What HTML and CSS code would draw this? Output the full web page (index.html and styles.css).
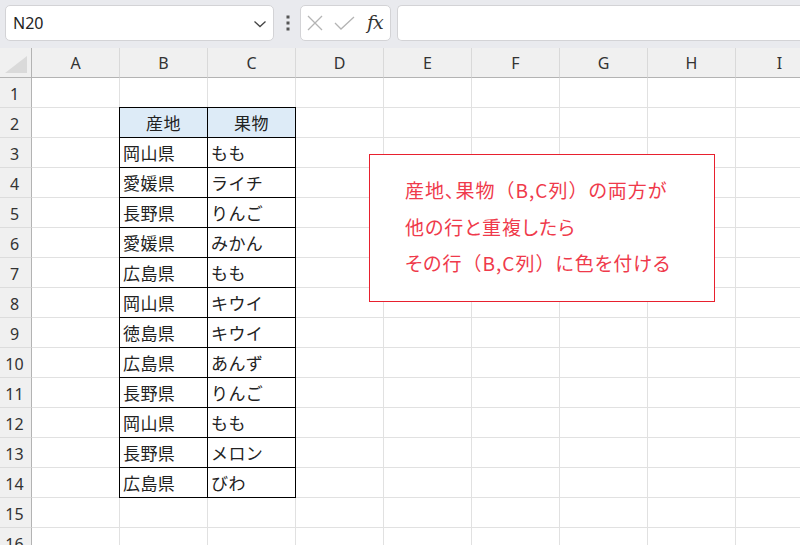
FILE: index.html
```html
<!DOCTYPE html>
<html lang="ja">
<head>
	<meta charset="UTF-8">
	<title>Sheet</title>
	<link rel="stylesheet" href="styles.css">
</head>
<body>
	<header class="topbar">
		<div class="namebox">
			<span>N20</span>
			<svg class="chevron" width="14" height="8" viewBox="0 0 14 8"><path d="M1.5 1.5 L7 6.5 L12.5 1.5" fill="none" stroke="#444" stroke-width="1.3"/></svg>
		</div>
		<div class="dots">
			<svg width="4" height="16" viewBox="0 0 4 16"><rect x="0.5" y="0.5" width="3" height="3" fill="#555"/><rect x="0.5" y="6.5" width="3" height="3" fill="#555"/><rect x="0.5" y="12.5" width="3" height="3" fill="#555"/></svg>
		</div>
		<div class="fbuttons">
			<svg width="16" height="16" viewBox="0 0 16 16"><path d="M1 1 L15 15 M15 1 L1 15" stroke="#b4b4b4" stroke-width="1.3"/></svg>
			<svg width="21" height="14" viewBox="0 0 21 14"><path d="M1 7 L7 13 L20 1" fill="none" stroke="#b4b4b4" stroke-width="1.3"/></svg>
			<span class="fx">fx</span>
		</div>
		<div class="fbar"></div>
	</header>

	<section class="sheet" id="sheet">
		<div class="corner">
			<svg width="22" height="17" viewBox="0 0 22 17"><polygon points="22,0 22,17 0,17" fill="#dadada"/></svg>
		</div>
		<div class="datatable">
			<div class="dcell head">産地</div><div class="dcell head">果物</div>
			<div class="dcell">岡山県</div><div class="dcell">もも</div>
			<div class="dcell">愛媛県</div><div class="dcell">ライチ</div>
			<div class="dcell">長野県</div><div class="dcell">りんご</div>
			<div class="dcell">愛媛県</div><div class="dcell">みかん</div>
			<div class="dcell">広島県</div><div class="dcell">もも</div>
			<div class="dcell">岡山県</div><div class="dcell">キウイ</div>
			<div class="dcell">徳島県</div><div class="dcell">キウイ</div>
			<div class="dcell">広島県</div><div class="dcell">あんず</div>
			<div class="dcell">長野県</div><div class="dcell">りんご</div>
			<div class="dcell">岡山県</div><div class="dcell">もも</div>
			<div class="dcell">長野県</div><div class="dcell">メロン</div>
			<div class="dcell">広島県</div><div class="dcell">びわ</div>
		</div>
		<div class="note">
			産地、果物<span class="fw">（</span>B,C列<span class="fw">）</span>の両方が<br>
			他の行と重複したら<br>
			その行<span class="fw">（</span>B,C列<span class="fw">）</span>に色を付ける
		</div>
	</section>

	<script>
	(function(){
		var sheet = document.getElementById("sheet");
		var cols = "ABCDEFGHI";
		function add(cls, text){
			var d = document.createElement("div");
			d.className = cls;
			if (text) d.textContent = text;
			sheet.appendChild(d);
		}
		for (var c = 0; c < cols.length; c++){
			add("colhead", cols[c]);
		}
		for (var r = 1; r <= 16; r++){
			add("rowhead", String(r));
			// B,C of rows 2-14 are taken by the table
			var n = (r >= 2 && r <= 14) ? 7 : 9;
			for (var i = 0; i < n; i++){
				add("cell");
			}
		}
	})();
	</script>
</body>
</html>
```

FILE: styles.css
```css
* {
	margin: 0;
	padding: 0;
	box-sizing: border-box;
}
body {
	width: 800px;
	height: 545px;
	overflow: hidden;
	position: relative;
	background: #fff;
	font-family: "Noto Sans", "Noto Sans CJK JP", sans-serif;
}
.topbar {
	height: 48px;
	background: #e9eaee;
	display: flex;
	align-items: flex-start;
	padding: 5px 0 0 5px;
}
.namebox {
	width: 269px;
	height: 36px;
	background: #fff;
	border: 1px solid #d3d3d6;
	border-radius: 5px;
	display: flex;
	align-items: center;
	padding: 0 6px 0 7px;
	font-size: 16px;
	color: #222;
}
.namebox span {
	flex: 1;
}
.chevron {
	margin-top: 2px;
}
.dots {
	width: 26px;
	height: 36px;
	display: flex;
	align-items: center;
	justify-content: center;
	padding-left: 1px;
}
.fbuttons {
	width: 91px;
	height: 36px;
	background: #fff;
	border: 1px solid #d3d3d6;
	border-radius: 5px;
	display: flex;
	align-items: center;
	padding-left: 6px;
	gap: 11px;
}
.fx {
	font-family: "DejaVu Serif", serif;
	font-style: italic;
	font-size: 19px;
	color: #333;
	margin-left: 1px;
	margin-top: -3px;
	letter-spacing: -1px;
}
.fbar {
	flex: 1;
	height: 36px;
	margin-left: 6px;
	background: #fff;
	border: 1px solid #d3d3d6;
	border-right: none;
	border-radius: 5px 0 0 5px;
}

.sheet {
	position: relative;
	display: grid;
	grid-template-columns: 32px repeat(9, 88px);
	grid-auto-rows: 30px;
	width: 800px;
	overflow: hidden;
}
.corner {
	background: #f0f0f0;
	border-bottom: 1px solid #b3b3b3;
	border-right: 1px solid #b3b3b3;
	display: flex;
	align-items: flex-end;
	justify-content: flex-end;
	padding: 0 4px 4px 0;
}
.colhead {
	background: #f0f0f0;
	border-bottom: 1px solid #b3b3b3;
	border-right: 1px solid #d9d9d9;
	display: flex;
	align-items: center;
	justify-content: center;
	font-size: 16px;
	color: #333;
}
.rowhead {
	grid-column: 1;
	background: #f0f0f0;
	border-right: 1px solid #b3b3b3;
	border-bottom: 1px solid #dcdcdc;
	display: flex;
	align-items: center;
	justify-content: center;
	padding: 2px 2px 0 0;
	font-size: 16px;
	color: #333;
}
.cell {
	border-right: 1px solid #e1e1e1;
	border-bottom: 1px solid #e1e1e1;
}

.datatable {
	grid-column: 3 / 5;
	grid-row: 3 / 16;
	z-index: 1;
	margin: -1px 0 0 -1px;
	background: #fff;
	border-left: 1px solid #000;
	border-top: 1px solid #000;
	display: grid;
	grid-template-columns: 88px 88px;
	grid-auto-rows: 30px;
}
.dcell {
	border-right: 1px solid #000;
	border-bottom: 1px solid #000;
	display: flex;
	align-items: center;
	padding-left: 3px;
	font-family: "Noto Sans CJK JP", sans-serif;
	font-size: 17px;
	letter-spacing: 0.4px;
	color: #222;
}
.dcell.head {
	background: #ddebf7;
	justify-content: center;
	padding-left: 0;
}

.note {
	position: absolute;
	left: 369px;
	top: 106px;
	width: 346px;
	height: 148px;
	z-index: 2;
	background: #fff;
	border: 1px solid #e8202e;
	padding: 17px 0 0 35px;
	font-family: "Noto Sans CJK JP", sans-serif;
	font-size: 19px;
	font-feature-settings: "palt";
	letter-spacing: 1px;
	line-height: 36.5px;
	color: #ef3a4b;
}
.note .fw {
	font-feature-settings: normal;
}
```
